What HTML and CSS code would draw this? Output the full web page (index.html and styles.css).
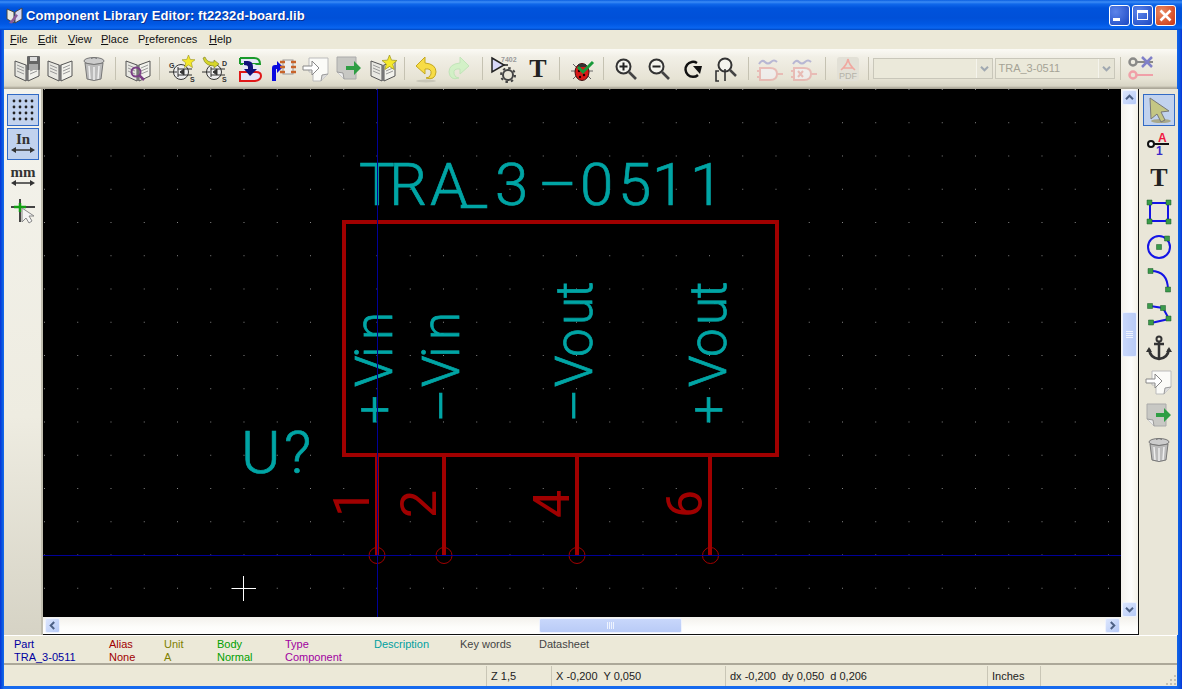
FILE: index.html
```html
<!DOCTYPE html>
<html lang="en">
<head>
  <meta charset="UTF-8" />
  <title>Component Library Editor: ft2232d-board.lib</title>
  <link rel="stylesheet" href="styles.css">
</head>
<body>
  <!-- shared icon shapes -->
  <svg class="defs" width="0" height="0">
    <defs>
      <symbol id="book" viewBox="0 0 28 28">
        <path d="M2 6 13 10V26L2 21Z" fill="#e8e8e2" stroke="#555" />
        <path d="M15 10 26 6V21L15 26Z" fill="#f2f2ec" stroke="#555" />
        <path d="M13 10q1-1 2 0V26h-2Z" fill="#777" />
        <path d="M4 10l7 3M4 13l7 3M4 16l7 3M17 13l7-3M17 16l7-3M17 19l7-3" stroke="#999" fill="none" />
      </symbol>
      <symbol id="trash" viewBox="0 0 28 28">
        <ellipse cx="14" cy="6" rx="10" ry="3.5" fill="#ccc" stroke="#777" />
        <path d="M11 3.5q3-2 6 0" stroke="#777" fill="none" />
        <path d="M5 8 7 24q7 3 14 0L23 8q-9 3-18 0Z" fill="#bbb" stroke="#777" />
        <path d="M9 11 10 24M14 12V25M19 11 18 24" stroke="#eee" stroke-width="1.5" />
      </symbol>
      <symbol id="import" viewBox="0 0 28 28">
        <path d="M7 3H26V19L19 26H11V17H7Z" fill="#fbfbf8" stroke="#bbb" />
        <path d="M26 19 20 20 19 26" fill="#ddd" stroke="#999" />
        <path d="M1 11H10V6L17 13 10 20V15H1Z" fill="#fff" stroke="#888" />
      </symbol>
      <symbol id="export" viewBox="0 0 28 28">
        <path d="M2 2H21V24H9L2 17Z" fill="#c8c8c4" stroke="#aaa" />
        <path d="M2 17 8 18 9 24" fill="#eee" stroke="#999" />
        <path d="M11 11H19V6L26 13 19 20V15H11Z" fill="#2f9e44" />
      </symbol>
      <symbol id="star" viewBox="0 0 12 12">
        <path d="M6 0 7.6 4.1 12 4.4 8.6 7.2 9.7 11.6 6 9.2 2.3 11.6 3.4 7.2 0 4.4 4.4 4.1Z" fill="#f5e82a" stroke="#a09a20" stroke-width=".6" />
      </symbol>
      <symbol id="fet" viewBox="0 0 28 28">
        <circle cx="13" cy="17" r="7.5" fill="#eee" stroke="#333" />
        <path d="M1 17H9M10 12V22M10 14H24M10 20H24M12 17 16 14V20Z" stroke="#333" fill="#333" />
      </symbol>
      <symbol id="glass" viewBox="0 0 24 24">
        <circle cx="9.5" cy="9.5" r="7" fill="#f4f4ee" stroke="#333" stroke-width="2" />
        <path d="M15 15 22 22" stroke="#444" stroke-width="2.6" />
      </symbol>
      <symbol id="gate" viewBox="0 0 28 28">
        <path d="M3 9q3-5 6-2t6 0 6 0" fill="none" stroke="#8c8cc8" stroke-width="2" />
        <path d="M4 13H14Q21 13 21 19 21 25 14 25H4Z" fill="#f4f4fb" stroke="#e89a9a" stroke-width="2" />
        <path d="M21 19H27M4 16H1M4 22H1" stroke="#e89a9a" stroke-width="2" />
      </symbol>
      <symbol id="chev" viewBox="0 0 9 9">
        <path d="M1 6.2 4.5 2.7 8 6.2" fill="none" stroke="#4d6185" stroke-width="2" />
      </symbol>
    </defs>
  </svg>

  <div class="window">
    <div class="titlebar">
      <svg class="app-icon" width="18" height="18" viewBox="0 0 18 18">
        <path d="M1 3 8 6V17L1 13Z" fill="#e8e8e2" stroke="#444" />
        <path d="M9 6 16 2V13L9 17Z" fill="#d8d8f0" stroke="#444" />
        <path d="M3 17 10 8l2 1.500-6 8Z" fill="#8a5a9a" />
      </svg>
      <span class="title-text">Component Library Editor: ft2232d-board.lib</span>
      <div class="win-btns">
        <div class="win-btn"><i class="glyph-min"></i></div>
        <div class="win-btn"><i class="glyph-max"></i></div>
        <div class="win-btn close">
          <svg width="13" height="13" viewBox="0 0 13 13"><path d="M1.500 1.500 11.500 11.500M11.500 1.500 1.500 11.500" stroke="#fff" stroke-width="2.600" /></svg>
        </div>
      </div>
    </div>

    <div class="menubar">
      <span class="menu-item m-file"><u>F</u>ile</span>
      <span class="menu-item m-edit"><u>E</u>dit</span>
      <span class="menu-item m-view"><u>V</u>iew</span>
      <span class="menu-item m-place"><u>P</u>lace</span>
      <span class="menu-item m-pref">P<u>r</u>eferences</span>
      <span class="menu-item"><u>H</u>elp</span>
    </div>

    <div class="toolbar">
      <div class="tool">
        <svg class="icon"><use href="#book" /><rect x="14" y="1" width="13" height="14" rx="1" fill="#666" /><rect x="17" y="2" width="7" height="4" fill="#ddd" /><rect x="16" y="9" width="9" height="6" fill="#aaa" /></svg>
      </div>
      <div class="tool"><svg class="icon"><use href="#book" /></svg></div>
      <div class="tool"><svg class="icon"><use href="#trash" /></svg></div>
      <div class="sep"></div>
      <div class="tool">
        <svg class="icon"><use href="#book" /><circle cx="12" cy="17" r="4.500" fill="none" stroke="#7b3f86" stroke-width="2" /><path d="M15 20 20 25" stroke="#7b3f86" stroke-width="2.500" /></svg>
      </div>
      <div class="sep"></div>
      <div class="tool">
        <svg class="icon"><use href="#fet" /><use href="#star" x="14" y="0" width="13" height="13" /><text class="icon-tiny" x="1" y="13">G</text><text class="icon-tiny" x="22" y="27">S</text></svg>
      </div>
      <div class="tool">
        <svg class="icon"><use href="#fet" /><path d="M4 2q2 6 9 5V5l5 4-5 4v-2Q4 11 2 3Z" fill="#d6d62a" stroke="#7a7a20" stroke-width=".6" /><text class="icon-tiny" x="21" y="11">D</text><text class="icon-tiny" x="21" y="27">S</text></svg>
      </div>
      <div class="tool">
        <svg class="icon">
          <path d="M5 3H19Q25 3 25 9H5M5 3V9" fill="#e6e6f8" stroke="#1a9a2a" stroke-width="2" />
          <path d="M8 9H19Q26 11 26 18 25 25 18 25H5" fill="#e6e6f8" />
          <path d="M5 17H21Q26 17 26 21T20 26H5Z" fill="#e6e6f8" stroke="#e01818" stroke-width="2" />
          <path d="M9 6H13Q18 6 18 12V14H22L15 21 9 14H13V12Q13 10 9 10Z" fill="#10107a" />
        </svg>
      </div>
      <div class="tool">
        <svg class="icon">
          <path d="M4 26V13Q4 10 7 10H9V6L15 12 9 18V14H8V26Z" fill="#0a0ae0" />
          <rect x="15" y="5" width="10" height="14" fill="#eee" stroke="#999" />
          <path d="M12 7h5M12 12h5M12 17h5M23 7h5M23 12h5M23 17h5" stroke="#c8642a" stroke-width="2.500" />
        </svg>
      </div>
      <div class="tool"><svg class="icon"><use href="#import" /></svg></div>
      <div class="tool"><svg class="icon"><use href="#export" /></svg></div>
      <div class="tool"><svg class="icon"><use href="#book" /><use href="#star" x="13" y="0" width="15" height="15" /></svg></div>
      <div class="sep"></div>
      <div class="tool">
        <svg class="icon"><path d="M12 2 3 11 12 19V14Q19 13 18 19 17 23 13 23 22 26 23 17 23 9 12 8Z" fill="#f7dc45" stroke="#c4a820" /><ellipse cx="13" cy="26" rx="10" ry="1.500" fill="#c8c6b8" /></svg>
      </div>
      <div class="tool">
        <svg class="icon faded"><path d="M14 2 23 11 14 19V14Q7 13 8 19 9 23 13 23 4 26 3 17 3 9 14 8Z" fill="#cdf3c2" stroke="#b8e4b0" /></svg>
      </div>
      <div class="sep"></div>
      <div class="tool">
        <svg class="icon">
          <path d="M2 3 14 10 2 17Z" fill="#d8d8fa" stroke="#222" stroke-width="1.500" />
          <path d="M14 10H18" stroke="#222" stroke-width="1.500" />
          <circle cx="18" cy="20" r="5" fill="none" stroke="#444" stroke-width="2" />
          <circle cx="18" cy="20" r="7" fill="none" stroke="#444" stroke-width="2" stroke-dasharray="2.500 3" />
          <text class="icon-tiny faint" x="11" y="7">7402</text>
        </svg>
      </div>
      <div class="tool"><svg class="icon"><text class="icon-t" x="14" y="22">T</text></svg></div>
      <div class="sep"></div>
      <div class="tool">
        <svg class="icon">
          <path d="M5 9 9 13M3 16H8M5 24 9 20M23 9 19 13M25 16H20M23 24 19 20" stroke="#666" />
          <ellipse cx="14" cy="17" rx="7" ry="8.500" fill="#d81818" stroke="#401010" />
          <path d="M10 9H18V12H10Z" fill="#333" />
          <circle cx="11" cy="16" r="1.200" fill="#200" /><circle cx="16" cy="20" r="1.200" fill="#200" /><circle cx="12" cy="22" r="1.200" fill="#200" />
          <path d="M10 12 15 17 25 7" fill="none" stroke="#189a3a" stroke-width="3" />
        </svg>
      </div>
      <div class="sep"></div>
      <div class="tool"><svg class="icon icon-sm" viewBox="0 0 24 24"><use href="#glass" /><path d="M5.500 9.500H13.500M9.500 5.500V13.500" stroke="#222" stroke-width="2" /></svg></div>
      <div class="tool"><svg class="icon icon-sm" viewBox="0 0 24 24"><use href="#glass" /><path d="M5.500 9.500H13.500" stroke="#222" stroke-width="2" /></svg></div>
      <div class="tool">
        <svg class="icon icon-sm" viewBox="0 0 24 24"><path d="M17 18A7.500 7.500 0 1 1 16 6" fill="none" stroke="#111" stroke-width="2.500" /><path d="M12 9 21 9 19 17Z" fill="#111" /></svg>
      </div>
      <div class="tool">
        <svg class="icon"><circle cx="13" cy="10" r="6.500" fill="#f4f4ee" stroke="#333" stroke-width="2" /><path d="M18 15 24 21" stroke="#444" stroke-width="2.500" /><path d="M7 16H4V26H7M13 14V26" fill="none" stroke="#333" stroke-width="1.600" /></svg>
      </div>
      <div class="sep"></div>
      <div class="tool"><svg class="icon pale"><use href="#gate" /></svg></div>
      <div class="tool"><svg class="icon pale"><use href="#gate" /><path d="M8 16 13 22M13 16 8 22" stroke="#e89a9a" stroke-width="2" /></svg></div>
      <div class="sep"></div>
      <div class="tool">
        <svg class="icon">
          <rect x="3" y="2" width="22" height="24" rx="3" fill="#e2e0d6" />
          <path d="M14 4Q13 10 7 15M14 4Q15 10 21 15M9 13H19" fill="none" stroke="#f0a8a0" stroke-width="1.600" />
          <text class="icon-pdf" x="14" y="24">PDF</text>
        </svg>
      </div>
      <div class="sep sep-end"></div>
      <div class="combo">
        <span class="combo-value"></span>
        <span class="combo-btn"><svg class="combo-chev" width="9" height="9"><use href="#chev" /></svg></span>
      </div>
      <div class="combo">
        <span class="combo-value">TRA_3-0511</span>
        <span class="combo-btn"><svg class="combo-chev" width="9" height="9"><use href="#chev" /></svg></span>
      </div>
      <div class="sep sep-end"></div>
      <div class="tool">
        <svg class="icon">
          <circle cx="6" cy="7" r="3.500" fill="none" stroke="#8a8a88" stroke-width="2.500" />
          <path d="M10 7H26" stroke="#8a8a88" stroke-width="2" />
          <path d="M15 2 25 12M25 2 15 12" stroke="#8080c8" stroke-width="2.500" />
          <circle cx="6" cy="20" r="3.500" fill="none" stroke="#f0a0a8" stroke-width="2.500" />
          <path d="M10 20H26" stroke="#f0a0a8" stroke-width="2" />
        </svg>
      </div>
    </div>

    <div class="main">
      <div class="side side-left">
        <div class="side-btn active">
          <svg width="24" height="24" viewBox="0 0 24 24"><defs><pattern id="griddots" width="6" height="6" patternUnits="userSpaceOnUse"><circle cx="3" cy="3" r="1.400" fill="#222" /></pattern></defs><rect width="24" height="24" fill="url(#griddots)" /></svg>
        </div>
        <div class="side-btn active">
          <svg width="28" height="28" viewBox="0 0 28 28">
            <text class="icon-unit" x="14" y="14">In</text>
            <path d="M5 20H23" stroke="#333" stroke-width="1.500" /><path d="M2 20 7 17V23ZM26 20 21 17V23Z" fill="#333" />
          </svg>
        </div>
        <div class="side-btn">
          <svg width="28" height="28" viewBox="0 0 28 28">
            <text class="icon-unit" x="14" y="13">mm</text>
            <path d="M5 19H23" stroke="#333" stroke-width="1.500" /><path d="M2 19 7 16V22ZM26 19 21 16V22Z" fill="#333" />
          </svg>
        </div>
        <div class="side-btn">
          <svg width="28" height="28" viewBox="0 0 28 28">
            <path d="M2 9H26M11 1V24" stroke="#444" stroke-width="2" /><path d="M5 9H17M11 5V14" stroke="#12a012" stroke-width="2.500" />
            <path d="M13 10V24L17 20 20 25 23 23 20 18 25 18Z" fill="#f4f4f4" stroke="#888" />
          </svg>
        </div>
      </div>
      <div class="divider"></div>

      <div class="work">
        <div class="work-top">
          <svg class="canvas" width="1078" height="528" viewBox="43 89 1078 528">
            <defs>
              <pattern id="grid" x="44" y="89" width="33.25" height="33.25" patternUnits="userSpaceOnUse">
                <rect class="grid-dot" width="1" height="1" />
              </pattern>
            </defs>
            <rect x="43" y="89" width="1078" height="528" fill="#000" />
            <rect x="43" y="89" width="1078" height="528" fill="url(#grid)" />

            <text class="sch-text sch-name" x="359 389 430 461 495 538 580 618 652 690" y="205">TRA_3–0511</text>
            <text class="sch-text sch-ref" x="241 284" y="473">U?</text>

            <g transform="translate(392 422) rotate(-90)">
              <text class="sch-text sch-pin" x="-2 35 64 82" y="0">+Vin</text>
            </g>
            <g transform="translate(459 422) rotate(-90)">
              <text class="sch-text sch-pin" x="0 35 64 82" y="0">–Vin</text>
            </g>
            <g transform="translate(592 422) rotate(-90)">
              <text class="sch-text sch-pin" x="0 35 65 97 124" y="0">–Vout</text>
            </g>
            <g transform="translate(725.500 422) rotate(-90)">
              <text class="sch-text sch-pin" x="-2 35 65 97 124" y="0">+Vout</text>
            </g>

            <rect class="sch-body" x="344" y="222" width="433" height="233" />
            <path class="sch-pinline" d="M377 455V555M444 455V555M577 455V555M710 455V555" />
            <circle class="sch-end" cx="377" cy="555.500" r="8" />
            <circle class="sch-end" cx="444" cy="555.500" r="8" />
            <circle class="sch-end" cx="577" cy="555.500" r="8" />
            <circle class="sch-end" cx="710.500" cy="555.500" r="8" />
            <text class="sch-num" transform="translate(369 517) rotate(-90)">1</text>
            <text class="sch-num" transform="translate(436 518) rotate(-90)">2</text>
            <text class="sch-num" transform="translate(569 518) rotate(-90)">4</text>
            <text class="sch-num" transform="translate(702 518) rotate(-90)">6</text>

            <path class="sch-axis" d="M377.500 89V617M43 555.500H1121" />
            <path class="sch-cursor" d="M231.500 588.500H256M243.500 576V601" />
          </svg>

          <div class="vscroll">
            <div class="sb-btn"><svg width="9" height="9"><use href="#chev" /></svg></div>
            <div class="vtrack-top"></div>
            <div class="sb-thumb sb-thumb-v"><i></i><i></i><i></i><i></i></div>
            <div class="fill"></div>
            <div class="sb-btn"><svg class="rot-180" width="9" height="9"><use href="#chev" /></svg></div>
          </div>
        </div>
        <div class="hscroll">
          <div class="sb-btn sb-btn-left"><svg class="rot-270" width="9" height="9"><use href="#chev" /></svg></div>
          <div class="htrack-left"></div>
          <div class="sb-thumb sb-thumb-h"><i></i><i></i><i></i><i></i></div>
          <div class="fill"></div>
          <div class="sb-btn sb-btn-right"><svg class="rot-90" width="9" height="9"><use href="#chev" /></svg></div>
        </div>
      </div>

      <div class="side side-right">
        <div class="side-btn active">
          <svg width="28" height="28" viewBox="0 0 28 28"><ellipse cx="16" cy="25" rx="10" ry="2" fill="#a8a88a" /><path d="M5 2 24 15 16 16 20 24 16 26 12 18 6 23Z" fill="#c4c684" stroke="#777" /></svg>
        </div>
        <div class="side-btn">
          <svg width="28" height="28" viewBox="0 0 28 28">
            <circle cx="6" cy="14" r="3" fill="#fff" stroke="#111" stroke-width="2" /><path d="M9 14H24" stroke="#111" stroke-width="2" />
            <text class="icon-pin-a" x="13" y="12">A</text><text class="icon-pin-1" x="11" y="25">1</text>
          </svg>
        </div>
        <div class="side-btn"><svg width="28" height="28" viewBox="0 0 28 28"><text class="icon-t" x="14" y="22">T</text></svg></div>
        <div class="side-btn">
          <svg width="28" height="28" viewBox="0 0 28 28">
            <rect x="5" y="5" width="18" height="18" fill="none" stroke="#1414e6" stroke-width="2" />
            <path class="handle" d="M2 2h5v5H2ZM21 2h5v5h-5ZM2 21h5v5H2ZM21 21h5v5h-5Z" />
          </svg>
        </div>
        <div class="side-btn">
          <svg width="28" height="28" viewBox="0 0 28 28">
            <circle cx="14" cy="15" r="11" fill="none" stroke="#1414e6" stroke-width="2" />
            <path class="handle" d="M11.500 12.500h5v5h-5ZM19.500 4h5v5h-5Z" />
          </svg>
        </div>
        <div class="side-btn">
          <svg width="28" height="28" viewBox="0 0 28 28">
            <path d="M6 5Q23 5 23 24" fill="none" stroke="#1414e6" stroke-width="2" />
            <path class="handle" d="M3 2.500h5v5H3ZM20.500 21h5v5h-5Z" />
          </svg>
        </div>
        <div class="side-btn">
          <svg width="28" height="28" viewBox="0 0 28 28">
            <path d="M5 6 18 8 24 19 6 23" fill="none" stroke="#1414e6" stroke-width="2" />
            <path class="handle" d="M2.500 3.500h5v5h-5ZM15.500 5.500h5v5h-5ZM21 16h5v5h-5ZM3.500 20h5v5h-5Z" />
          </svg>
        </div>
        <div class="side-btn">
          <svg width="28" height="28" viewBox="0 0 28 28">
            <circle cx="14" cy="5" r="2.500" fill="none" stroke="#333" stroke-width="2" />
            <path d="M9 10H19M14 7V25M4 15Q5 24 14 25 23 24 24 15" fill="none" stroke="#333" stroke-width="2.500" />
            <path d="M1 18 4 13 7 18ZM21 18 24 13 27 18Z" fill="#333" />
          </svg>
        </div>
        <div class="side-btn"><svg class="icon"><use href="#import" /></svg></div>
        <div class="side-btn"><svg class="icon"><use href="#export" /></svg></div>
        <div class="side-btn"><svg class="icon"><use href="#trash" /></svg></div>
      </div>
    </div>

    <div class="msgpanel">
      <div class="msg c-blue w95"><span>Part</span><span>TRA_3-0511</span></div>
      <div class="msg c-red w55"><span>Alias</span><span>None</span></div>
      <div class="msg c-olive w53"><span>Unit</span><span>A</span></div>
      <div class="msg c-green w68"><span>Body</span><span>Normal</span></div>
      <div class="msg c-mag w89"><span>Type</span><span>Component</span></div>
      <div class="msg c-teal w86"><span>Description</span><span></span></div>
      <div class="msg c-gray w79"><span>Key words</span><span></span></div>
      <div class="msg c-gray"><span>Datasheet</span><span></span></div>
    </div>

    <div class="statusbar">
      <div class="pane pane-main"></div>
      <div class="pane pane-zoom">Z 1,5</div>
      <div class="pane pane-xy">X -0,200&nbsp; Y 0,050</div>
      <div class="pane pane-dxy">dx -0,200&nbsp; dy 0,050&nbsp; d 0,206</div>
      <div class="pane pane-unit">Inches</div>
      <div class="pane pane-rest">
        <svg class="grip" width="12" height="12" viewBox="0 0 12 12">
          <path d="M9 1h2v2H9ZM5 5h2v2H5ZM9 5h2v2H9ZM1 9h2v2H1ZM5 9h2v2H5ZM9 9h2v2H9Z" fill="#c4c1b0" />
        </svg>
      </div>
    </div>
  </div>
</body>
</html>
```

FILE: styles.css
```css
html, body {
  margin: 0;
  padding: 0;
}
body {
  width: 1182px;
  height: 689px;
  overflow: hidden;
  font-family: "Liberation Sans", Arial, sans-serif;
  font-size: 11px;
  color: #222;
}
.defs {
  position: absolute;
}
.window {
  width: 1182px;
  height: 689px;
  display: flex;
  flex-direction: column;
  background: linear-gradient(90deg, #0831d9 0, #0855dd 2px, #166aee 4px, #166aee 1176px, #0855dd 1180px, #0831d9 1182px);
  padding: 0 5px 4px 4px;
  box-sizing: border-box;
}

/* title bar */
.titlebar {
  height: 30px;
  flex: none;
  margin: 0 -5px 0 -4px;
  padding: 0 6px 0 6px;
  display: flex;
  align-items: center;
  background: linear-gradient(180deg, #0a5ee0 0, #3c8cf5 2px, #1068ea 4px, #0053dc 8px, #0050d8 18px, #0058e4 24px, #0a66f0 28px, #0046c0 30px);
}
.app-icon {
  margin-right: 2px;
}
.title-text {
  color: #fff;
  font-family: "Liberation Sans", Arial, sans-serif;
  font-weight: bold;
  font-size: 13px;
  letter-spacing: .12px;
  text-shadow: 1px 1px 0 #0a2f90;
}
.win-btns {
  margin-left: auto;
  display: flex;
  gap: 2px;
}
.win-btn {
  width: 21px;
  height: 21px;
  box-sizing: border-box;
  border: 1px solid #fff;
  border-radius: 3px;
  background: radial-gradient(circle at 30% 30%, #5c84ea, #2450c8 85%);
  display: flex;
  align-items: center;
  justify-content: center;
  position: relative;
}
.win-btn.close {
  background: radial-gradient(circle at 30% 30%, #ea8a62, #d0401c 85%);
}
.glyph-min {
  width: 7px;
  height: 3px;
  background: #fff;
  margin: 9px 6px 0 0;
}
.glyph-max {
  width: 11px;
  height: 10px;
  box-sizing: border-box;
  border: 1px solid #fff;
  border-top-width: 3px;
}

/* menu */
.menubar {
  height: 19px;
  flex: none;
  box-sizing: border-box;
  padding: 0 0 2px 6px;
  background: #ece9d8;
  display: flex;
  align-items: center;
  color: #111;
}
.menu-item {
  margin-right: 9px;
}
.menu-item u {
  text-decoration-thickness: 1px;
}
.m-file { width: 19px; }
.m-edit { width: 21px; }
.m-view { width: 24px; }
.m-place { width: 28px; }
.m-pref { width: 62px; }

/* top toolbar */
.toolbar {
  height: 40px;
  flex: none;
  box-sizing: border-box;
  background: linear-gradient(180deg, #fbfaf5 0, #f1efe6 8px, #e6e3d4 30px, #d8d5c5 37px, #aca899 39px, #aca899 40px);
  display: flex;
  align-items: center;
  padding: 0 0 1px 6px;
}
.tool {
  width: 33.5px;
  height: 30px;
  flex: none;
  display: flex;
  align-items: center;
  justify-content: center;
}
.icon {
  width: 28px;
  height: 28px;
  flex: none;
}
.icon-sm {
  width: 24px;
  height: 24px;
}
.faded {
  opacity: .8;
}
.pale {
  opacity: .55;
}
.sep {
  width: 10.5px;
  height: 23px;
  flex: none;
  background: linear-gradient(#c5c2b2, #c5c2b2) center / 1px 100% no-repeat;
}
.sep-end {
  width: 8px;
}
.combo {
  width: 120px;
  height: 21px;
  box-sizing: border-box;
  margin-right: 2px;
  flex: none;
  border: 1px solid #c9c7ba;
  background: #ebe9da;
  display: flex;
  align-items: stretch;
  color: #a5a396;
  font-size: 11px;
  line-height: 19px;
}
.combo-value {
  flex: 1;
  padding-left: 3px;
}
.combo-btn {
  width: 15px;
  border-left: 1px solid #f5f4ec;
  background: #e6e4d6;
  display: flex;
  align-items: center;
  justify-content: center;
}
.combo-chev {
  opacity: .45;
  transform: rotate(180deg);
}

/* svg text on icons */
.icon-tiny {
  font-family: "Liberation Sans", Arial, sans-serif;
  font-size: 7px;
  font-weight: bold;
  fill: #333;
}
.faint {
  fill: #999;
}
.icon-t {
  font-family: "Liberation Serif", serif;
  font-weight: bold;
  font-size: 26px;
  text-anchor: middle;
  fill: #222;
}
.icon-pdf {
  font-family: "Liberation Sans", Arial, sans-serif;
  font-size: 9px;
  text-anchor: middle;
  fill: #b4b2a8;
}
.icon-unit {
  font-family: "Liberation Serif", serif;
  font-weight: bold;
  font-size: 15px;
  text-anchor: middle;
  fill: #333;
}
.icon-pin-a {
  font-family: "Liberation Sans", Arial, sans-serif;
  font-weight: bold;
  font-size: 12px;
  fill: #f01840;
}
.icon-pin-1 {
  font-family: "Liberation Sans", Arial, sans-serif;
  font-weight: bold;
  font-size: 12px;
  fill: #3a28c8;
}
.handle {
  fill: #3a9a4a;
  stroke: #1c5a2a;
  stroke-width: .5;
}

/* middle area */
.main {
  height: 546px;
  flex: none;
  display: flex;
  background: #ece9d8;
}
.side {
  width: 37px;
  flex: none;
  display: flex;
  flex-direction: column;
  align-items: center;
  padding-top: 5px;
  box-sizing: border-box;
  height: 100%;
}
.side-left {
  background: linear-gradient(180deg, #f4f3ec 0, #eeece1 60%, #d6d3c5 100%);
}
.side-right {
  width: 38px;
  margin-left: 1px;
  background: #e9e6d8;
}
.divider {
  width: 2px;
  flex: none;
  background: #c0bdae;
}
.side-btn {
  width: 32px;
  height: 32px;
  margin-bottom: 2px;
  flex: none;
  box-sizing: border-box;
  display: flex;
  align-items: center;
  justify-content: center;
}
.side-btn.active {
  background: #c1d2ee;
  border: 1px solid #316ac5;
}
.work {
  width: 1095px;
  flex: none;
  display: flex;
  flex-direction: column;
  border-right: 1px solid #111;
  border-bottom: 1px solid #111;
}
.work-top {
  height: 528px;
  display: flex;
}
.canvas {
  display: block;
  flex: none;
}

/* schematic drawing */
.grid-dot {
  fill: #8a8a8a;
  shape-rendering: crispEdges;
}
.sch-text {
  font-family: Roboto, "Liberation Sans", sans-serif;
  font-weight: 300;
  fill: #00a5a5;
  stroke: #00a5a5;
  stroke-width: .7;
}
.sch-name {
  font-size: 60px;
}
.sch-ref {
  font-size: 60px;
}
.sch-pin {
  font-size: 51px;
}
.sch-num {
  font-family: Roboto, "Liberation Sans", sans-serif;
  font-weight: 400;
  font-size: 50px;
  fill: #a00000;
}
.sch-body {
  fill: none;
  stroke: #a00000;
  stroke-width: 4;
}
.sch-pinline {
  fill: none;
  stroke: #a00000;
  stroke-width: 4;
}
.sch-end {
  fill: none;
  stroke: #a00000;
  stroke-width: 1;
}
.sch-axis {
  fill: none;
  stroke: #000098;
  stroke-width: 1;
}
.sch-cursor {
  fill: none;
  stroke: #fff;
  stroke-width: 1;
}

/* scrollbars */
.vscroll {
  width: 17px;
  flex: none;
  display: flex;
  flex-direction: column;
  align-items: center;
  padding-top: 1px;
  box-sizing: border-box;
  background: linear-gradient(90deg, #f3f1ec, #fdfdfb 60%, #f3f1e8);
}
.hscroll {
  height: 17px;
  flex: none;
  display: flex;
  align-items: center;
  background: linear-gradient(180deg, #f3f1ec, #fdfdfb 60%, #fff);
}
.sb-btn {
  width: 15px;
  height: 15px;
  flex: none;
  box-sizing: border-box;
  border: 1px solid #eef2fd;
  border-radius: 2px;
  background: linear-gradient(135deg, #dce6fd, #b6caf7);
  display: flex;
  align-items: center;
  justify-content: center;
}
.sb-btn-left {
  margin-left: 2px;
}
.sb-btn-right {
  margin-right: 18px;
}
.rot-90 { transform: rotate(90deg); }
.rot-180 { transform: rotate(180deg); }
.rot-270 { transform: rotate(270deg); }
.fill {
  flex: 1;
}
.vtrack-top {
  height: 207px;
  flex: none;
}
.htrack-left {
  width: 479px;
  flex: none;
}
.sb-thumb {
  flex: none;
  box-sizing: border-box;
  border: 1px solid #eef2fd;
  border-radius: 2px;
  display: flex;
  align-items: center;
  justify-content: center;
  gap: 1px;
}
.sb-thumb i {
  background: #eef3fe;
  display: block;
}
.sb-thumb-v {
  width: 15px;
  height: 45px;
  flex-direction: column;
  background: linear-gradient(90deg, #c8d7fb, #b9cbf6);
}
.sb-thumb-v i {
  width: 7px;
  height: 1px;
}
.sb-thumb-h {
  width: 143px;
  height: 15px;
  background: linear-gradient(180deg, #c8d7fb, #b9cbf6);
}
.sb-thumb-h i {
  width: 1px;
  height: 7px;
}

/* message panel */
.msgpanel {
  height: 30px;
  flex: none;
  box-sizing: border-box;
  background: #ece9d8;
  border-top: 1px solid #fff;
  border-bottom: 2px solid #aca899;
  display: flex;
  padding: 2px 0 0 10px;
  line-height: 13px;
}
.msg {
  display: flex;
  flex-direction: column;
  flex: none;
}
.msg span {
  height: 13px;
  display: block;
}
.w95 { width: 95px; }
.w55 { width: 55px; }
.w53 { width: 53px; }
.w68 { width: 68px; }
.w89 { width: 89px; }
.w86 { width: 86px; }
.w79 { width: 79px; }
.c-blue { color: #0000a0; }
.c-red { color: #a00000; }
.c-olive { color: #808000; }
.c-green { color: #00a000; }
.c-mag { color: #a000a0; }
.c-teal { color: #00a0a0; }
.c-gray { color: #444; }

/* status bar */
.statusbar {
  flex: 1;
  display: flex;
  background: #ece9d8;
  line-height: 20px;
  color: #222;
}
.pane {
  flex: none;
  box-sizing: border-box;
  height: 20px;
  margin-top: 1px;
  padding-left: 4px;
  border-left: 1px solid #c9c6b6;
}
.pane-main {
  width: 482px;
  border-left: 0;
}
.pane-zoom { width: 65px; }
.pane-xy { width: 174px; }
.pane-dxy { width: 262px; }
.pane-unit { width: 53px; }
.pane-rest {
  flex: 1;
  display: flex;
  justify-content: flex-end;
  align-items: flex-end;
}
.grip {
  display: block;
}
```
